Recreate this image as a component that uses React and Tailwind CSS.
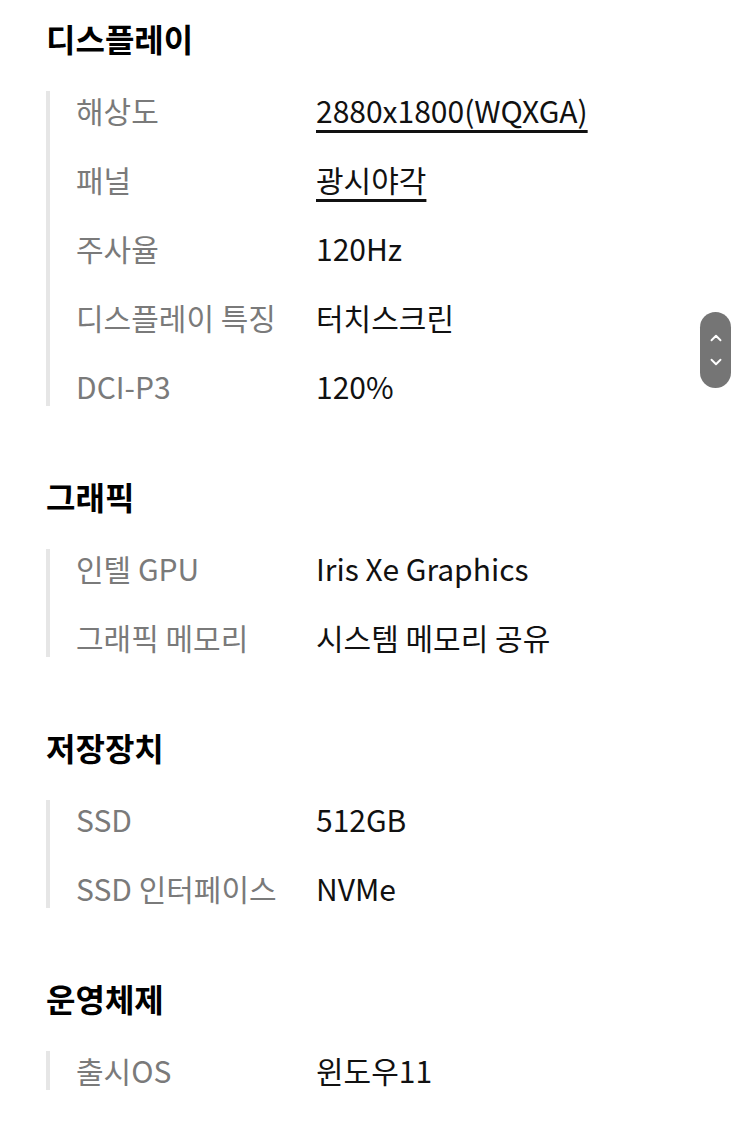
import { ChevronUp, ChevronDown } from "lucide-react";

const SECTIONS = [
  {
    title: "디스플레이",
    rows: [
      { label: "해상도", value: "2880x1800(WQXGA)", link: true },
      { label: "패널", value: "광시야각", link: true },
      { label: "주사율", value: "120Hz" },
      { label: "디스플레이 특징", value: "터치스크린" },
      { label: "DCI-P3", value: "120%" },
    ],
  },
  {
    title: "그래픽",
    rows: [
      { label: "인텔 GPU", value: "Iris Xe Graphics" },
      { label: "그래픽 메모리", value: "시스템 메모리 공유" },
    ],
  },
  {
    title: "저장장치",
    rows: [
      { label: "SSD", value: "512GB" },
      { label: "SSD 인터페이스", value: "NVMe" },
    ],
  },
  {
    title: "운영체제",
    rows: [{ label: "출시OS", value: "윈도우11" }],
  },
];

export default function App() {
  return (
    <div
      className="relative min-h-[1124px] w-[750px] bg-white pt-[18px]"
      style={{ fontFamily: '"Noto Sans CJK KR", "Noto Sans", sans-serif' }}
    >
      <div className="flex flex-col gap-[70px] pl-[46px]">
        {SECTIONS.map((section) => (
          <section key={section.title}>
            <h2 className="text-[32px] font-bold leading-[40px] text-black">{section.title}</h2>
            <div className="mt-[33px] flex flex-col gap-[30px] border-l-[4px] border-[#e6e6e6] pl-[26px]">
              {section.rows.map((row) => (
                <div key={row.label} className="flex h-[39px] items-center text-[30px] leading-[39px]">
                  <span className="w-[240px] shrink-0 text-[#7a7a7a]">{row.label}</span>
                  <span
                    className={
                      row.link
                        ? "text-[#111] underline decoration-[3px] underline-offset-[7px]"
                        : "text-[#111]"
                    }
                  >
                    {row.value}
                  </span>
                </div>
              ))}
            </div>
          </section>
        ))}
      </div>

      <div className="absolute left-[700px] top-[312px] flex h-[76px] w-[31px] flex-col items-center justify-center gap-[6px] rounded-full bg-[#666]/90">
        <ChevronUp size={18} strokeWidth={2.5} className="text-white" />
        <ChevronDown size={18} strokeWidth={2.5} className="text-white" />
      </div>
    </div>
  );
}
